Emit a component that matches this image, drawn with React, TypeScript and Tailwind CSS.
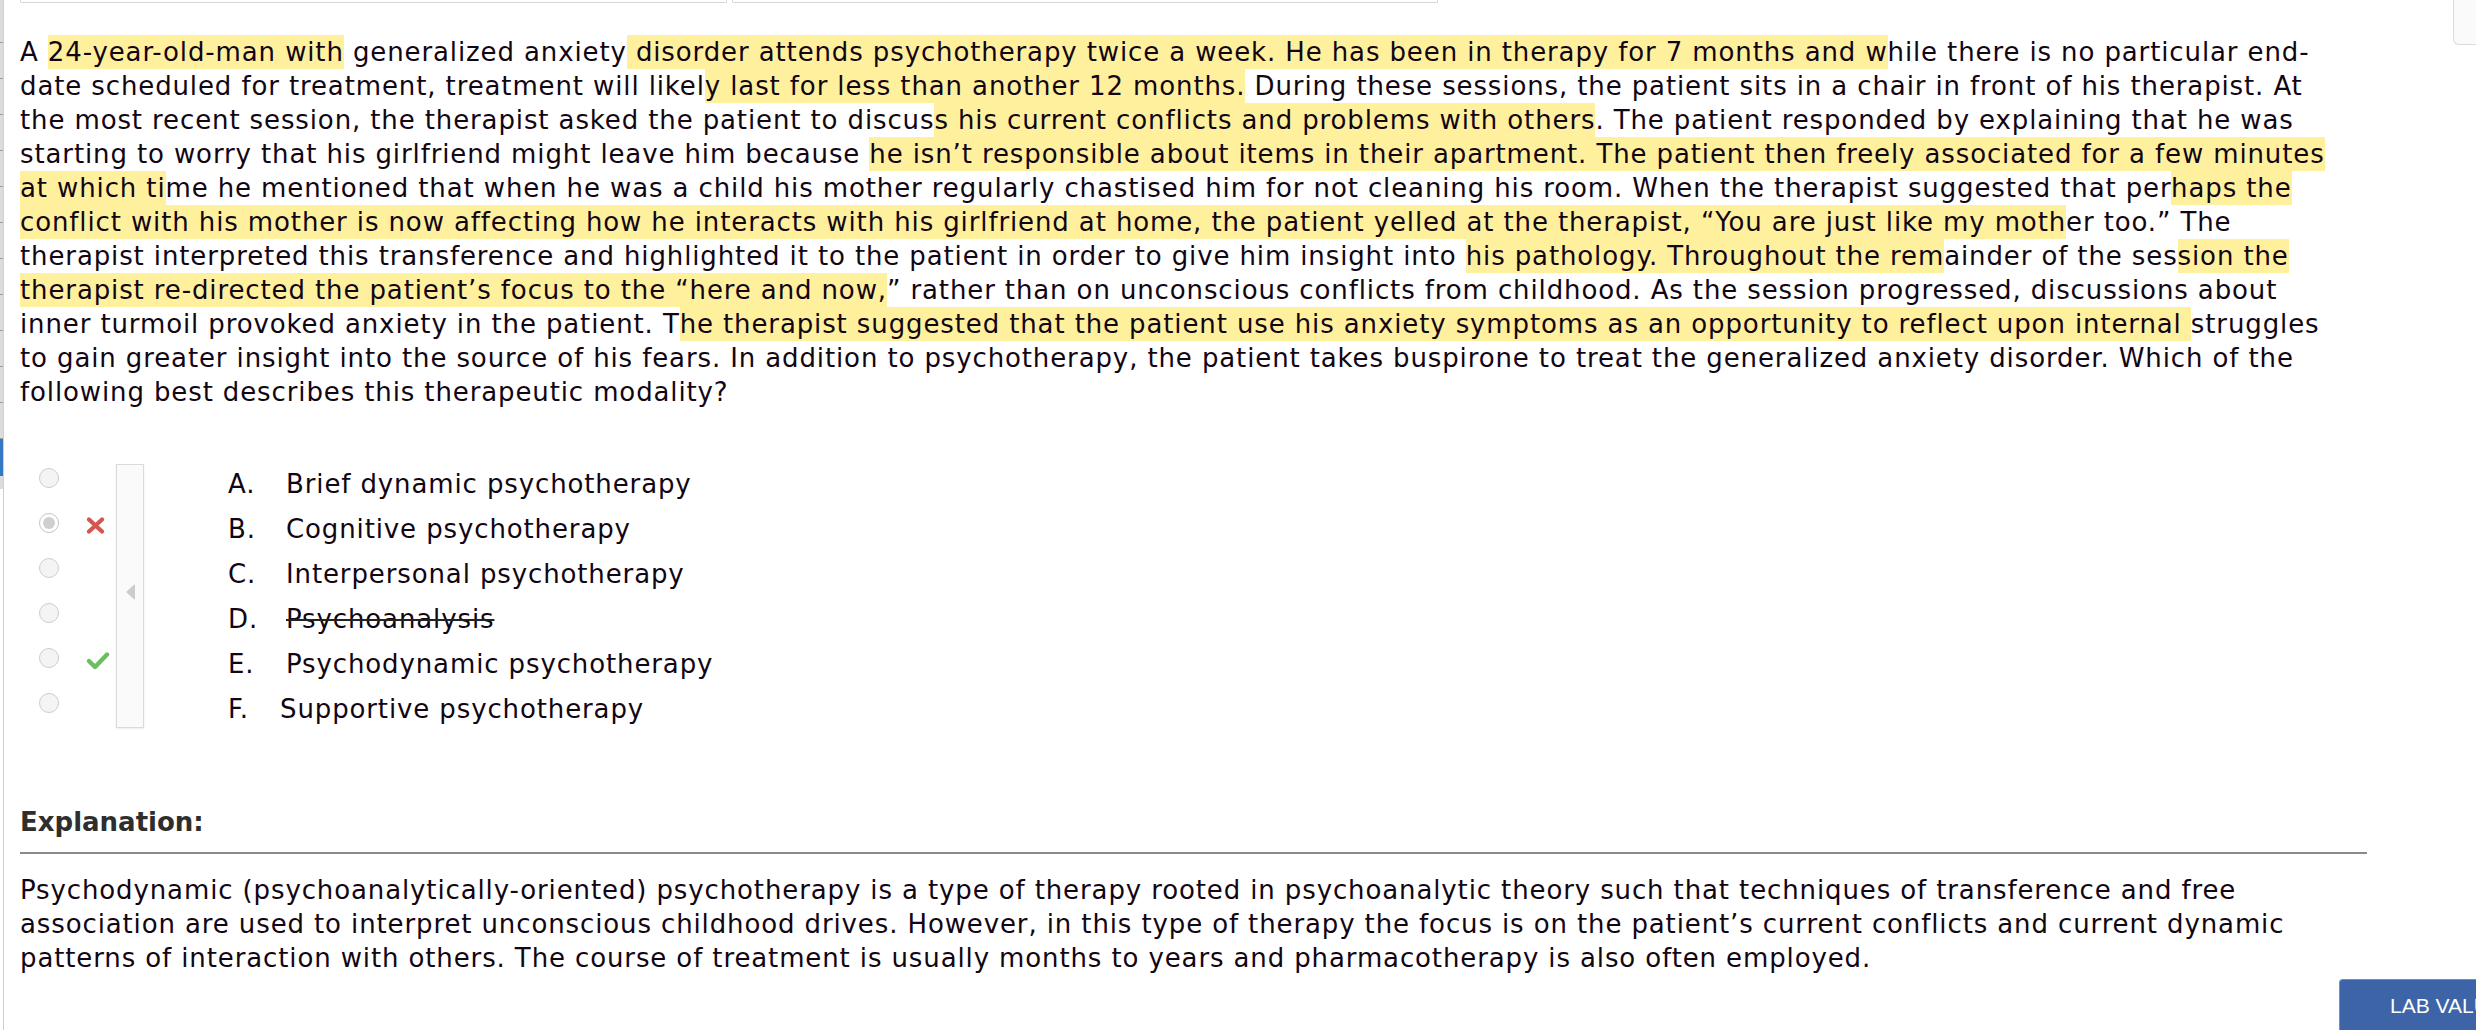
import React from 'react';

const stem: string[] = [
    'A [[24-year-old-man with]] generalized anxiety[[ disorder attends psychotherapy twice a week. He has been in therapy for 7 months and w]]hile there is no particular end-',
    'date scheduled for treatment, treatment will likel[[y last for less than another 12 months.]] During these sessions, the patient sits in a chair in front of his therapist. At',
    'the most recent session, the therapist asked the patient to discus[[s his current conflicts and problems with others]]. The patient responded by explaining that he was',
    'starting to worry that his girlfriend might leave him because [[he isn’t responsible about items in their apartment. The patient then freely associated for a few minutes]]',
    '[[at which ti]]me he mentioned that when he was a child his mother regularly chastised him for not cleaning his room. When the therapist suggested that per[[haps the]]',
    '[[conflict with his mother is now affecting how he interacts with his girlfriend at home, the patient yelled at the therapist, “You are just like my moth]]er too.” The',
    'therapist interpreted this transference and highlighted it to the patient in order to give him insight into [[his pathology. Throughout the rem]]ainder of the ses[[sion the]]',
    '[[therapist re-directed the patient’s focus to the “here and now,]]” rather than on unconscious conflicts from childhood. As the session progressed, discussions about',
    'inner turmoil provoked anxiety in the patient. T[[he therapist suggested that the patient use his anxiety symptoms as an opportunity to reflect upon internal ]]struggles',
    'to gain greater insight into the source of his fears. In addition to psychotherapy, the patient takes buspirone to treat the generalized anxiety disorder. Which of the',
    'following best describes this therapeutic modality?',
];

const explanation: string[] = [
    'Psychodynamic (psychoanalytically-oriented) psychotherapy is a type of therapy rooted in psychoanalytic theory such that techniques of transference and free',
    'association are used to interpret unconscious childhood drives. However, in this type of therapy the focus is on the patient’s current conflicts and current dynamic',
    'patterns of interaction with others. The course of treatment is usually months to years and pharmacotherapy is also often employed.',
];

type Choice = { letter: string; text: string; mark?: 'wrong' | 'right'; selected?: boolean; struck?: boolean };

const choices: Choice[] = [
    { letter: 'A.', text: 'Brief dynamic psychotherapy' },
    { letter: 'B.', text: 'Cognitive psychotherapy', mark: 'wrong', selected: true },
    { letter: 'C.', text: 'Interpersonal psychotherapy' },
    { letter: 'D.', text: 'Psychoanalysis', struck: true },
    { letter: 'E.', text: 'Psychodynamic psychotherapy', mark: 'right' },
    { letter: 'F.', text: 'Supportive psychotherapy' },
];

const HighlightLine: React.FC<{ line: string }> = ({ line }) => {
    // [[...]] marks the highlighted runs
    const parts = line.split(/\[\[|\]\]/);
    return (
        <div className="whitespace-pre h-[34px]">
            {parts.map((p, i) =>
                i % 2 === 1 ? (
                    <span key={i} className="bg-[#fff09e] py-[2px]">{p}</span>
                ) : (
                    <span key={i}>{p}</span>
                )
            )}
        </div>
    );
};

const WrongMark = () => (
    <svg width="19" height="17" viewBox="0 0 19 17">
        <path d="M3 2.5 L16 14.5 M16 2.5 L3 14.5" stroke="#d4574f" strokeWidth="4.2" strokeLinecap="round" fill="none" />
    </svg>
);

const RightMark = () => (
    <svg width="24" height="19" viewBox="0 0 24 19">
        <path d="M3 10 L9 16 L21 3.5" stroke="#6cbd5f" strokeWidth="4.4" strokeLinecap="round" strokeLinejoin="round" fill="none" />
    </svg>
);

const Radio: React.FC<{ selected?: boolean }> = ({ selected }) => (
    <div
        className={
            selected
                ? 'w-[20px] h-[20px] mb-[12px] rounded-full border border-[#c4c4c4] bg-white flex items-center justify-center'
                : 'w-[20px] h-[20px] mb-[12px] rounded-full border border-[#cdcdcd] bg-[#f4f4f4]'
        }
    >
        {selected && <div className="w-[12px] h-[12px] rounded-full bg-[#cfcfcf]" />}
    </div>
);

export default function App() {
    return (
        <div className="relative w-[2476px] h-[1030px] overflow-hidden bg-white flex font-['DejaVu_Sans','Verdana',sans-serif] text-[26px] leading-[34px] tracking-[0.88px] text-[#120612]">
            {/* question list strip at the left edge */}
            <div className="w-[4px] shrink-0 h-full border-r border-[#cfcfcf] flex flex-col">
                <div className="bg-[#dcdcdc] flex flex-col">
                    <div className="h-[43px] border-b border-[#9c9c9c]" />
                    {Array.from({ length: 11 }).map((_, i) => (
                        <div key={i} className="h-[36px] border-b border-[#9c9c9c]" />
                    ))}
                    <div className="h-[37px] bg-[#3579c4]" />
                    <div className="h-[13px]" />
                </div>
            </div>

            {/* main content */}
            <div className="flex-1 pl-[16px] flex flex-col">
                {/* bottoms of the toolbar boxes above */}
                <div className="flex gap-[5px]">
                    <div className="w-[707px] h-[3px] border-x border-b border-[#d6d6d6] rounded-b-[2px]" />
                    <div className="w-[706px] h-[3px] border-x border-b border-[#d6d6d6] rounded-b-[2px]" />
                </div>

                {/* question stem */}
                <div className="mt-[32px]">
                    {stem.map((l, i) => (
                        <HighlightLine key={i} line={l} />
                    ))}
                </div>

                {/* answer choices */}
                <div className="mt-[52px] flex">
                    <div className="w-[96px] flex flex-col">
                        {choices.map((c) => (
                            <div key={c.letter} className="h-[45px] flex items-center">
                                <div className="ml-[19px]">
                                    <Radio selected={c.selected} />
                                </div>
                                <div className="ml-[27px] mb-[6px] w-[24px]">
                                    {c.mark === 'wrong' && <WrongMark />}
                                    {c.mark === 'right' && <RightMark />}
                                </div>
                            </div>
                        ))}
                    </div>
                    <div className="mt-[3px] w-[28px] h-[264px] border border-[#dadada] bg-[#fafafa] shadow-[0_1px_2px_rgba(0,0,0,0.08)] flex items-center justify-center">
                        <div className="mb-[8px] w-0 h-0 border-y-[8px] border-y-transparent border-r-[9px] border-r-[#cccccc]" />
                    </div>
                    <div className="ml-[84px] flex flex-col">
                        {choices.map((c) => (
                            <div key={c.letter} className="h-[45px] flex items-center whitespace-nowrap">
                                <span className={c.letter === 'F.' ? 'w-[52px]' : 'w-[58px]'}>{c.letter}</span>
                                <span className={c.struck ? 'line-through decoration-[#222]' : ''}>{c.text}</span>
                            </div>
                        ))}
                    </div>
                </div>

                {/* explanation */}
                <div className="mt-[74px] w-[2347px]">
                    <div className="font-bold tracking-normal text-[#2e2e2e]">Explanation:</div>
                    <div className="mt-[13px] h-[2px] bg-[#8a8a8a]" />
                    <div className="mt-[19px]">
                        {explanation.map((l, i) => (
                            <div key={i} className="whitespace-pre">{l}</div>
                        ))}
                    </div>
                </div>
            </div>

            {/* corner of the panel at the top right */}
            <div className="absolute top-0 right-0 w-[23px] h-[45px] border-l border-b border-[#dcdcdc] bg-[#fafafa] rounded-bl-[6px]" />

            {/* lab values button, partly off screen */}
            <div className="absolute left-[2339px] top-[979px] w-[200px] h-[70px] bg-[#3d64a6] border-t border-l border-[#6f8fc4] rounded-tl-[4px] pl-[50px] pt-[14px] font-['Liberation_Sans',Arial,sans-serif] text-[21px] leading-[24px] tracking-normal text-white whitespace-nowrap">
                LAB VALUES
            </div>
        </div>
    );
}
